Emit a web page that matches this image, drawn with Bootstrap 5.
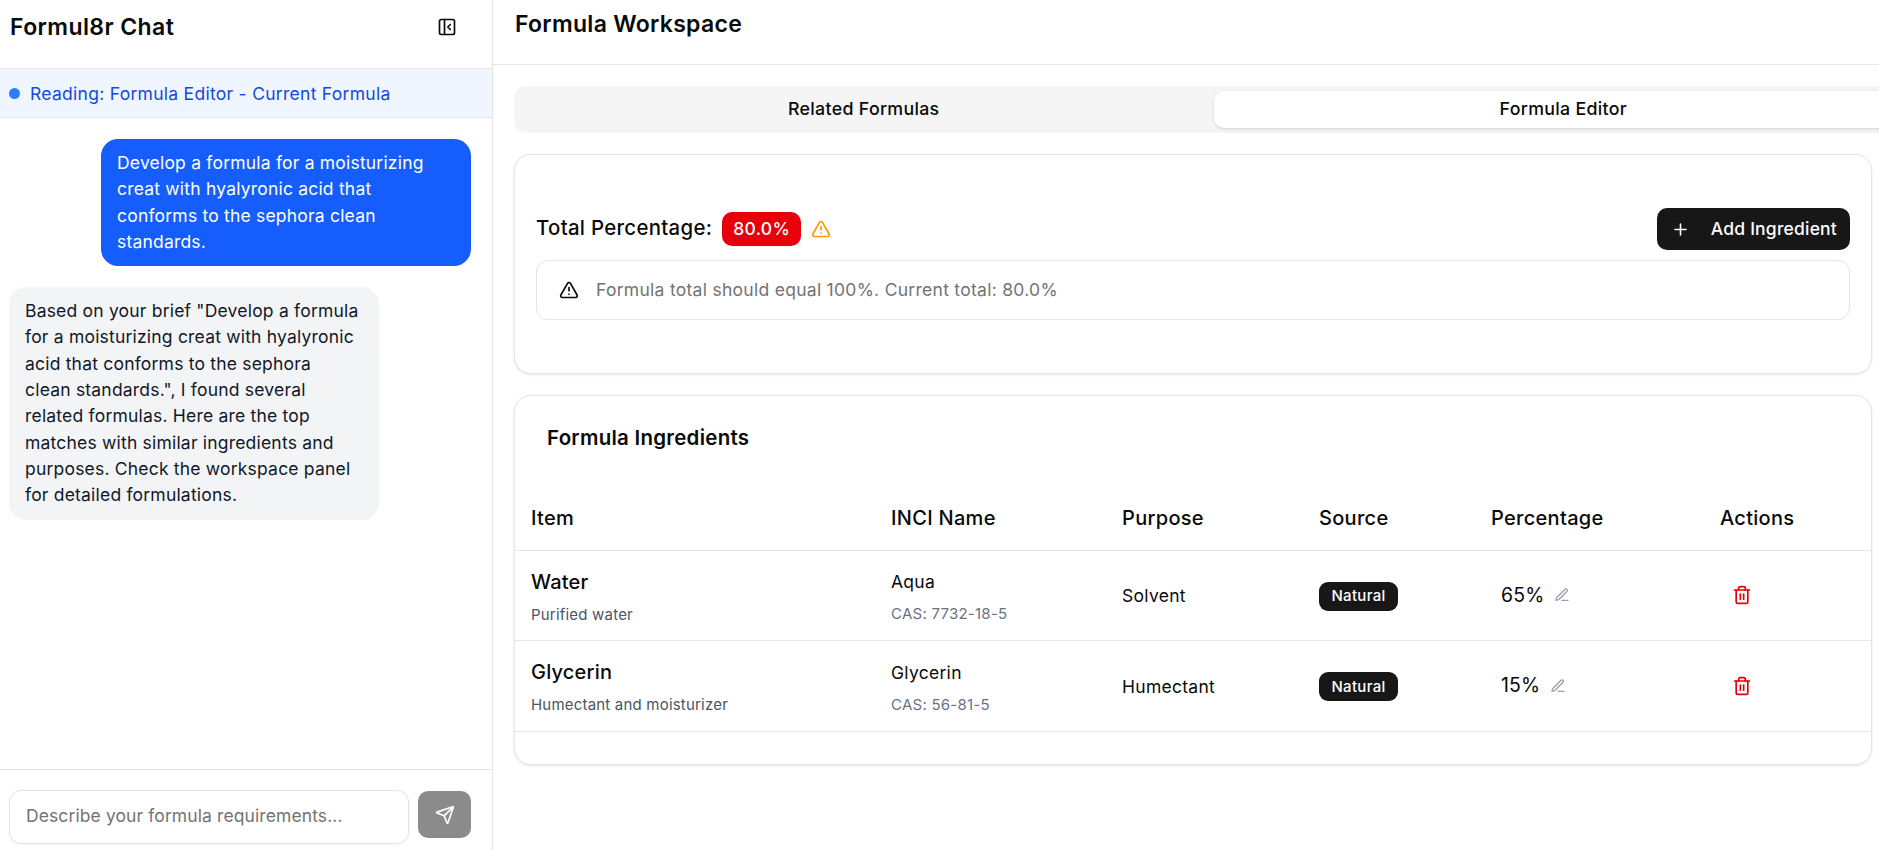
<!DOCTYPE html>
<html lang="en">
<head>
<meta charset="utf-8">
<title>Formul8r</title>
<link href="https://cdn.jsdelivr.net/npm/bootstrap@5.3.0/dist/css/bootstrap.min.css" rel="stylesheet">
<style>
html,body{height:850px;overflow:hidden;}
body{font-family:"Inter","Liberation Sans",sans-serif;color:#0a0a0a;background:#fff;font-size:17.5px;letter-spacing:.28px;}
svg.ic{fill:none;stroke:currentColor;stroke-width:2;stroke-linecap:round;stroke-linejoin:round;display:block;flex:none;}
.shell{height:850px;}
.side{width:493px;border-right:1px solid #e5e5e5;height:850px;}
.side-head{height:69px;padding:13px 35px 0 10px;border-bottom:1px solid #e5e5e5;}
.side-title{font-size:23px;font-weight:600;line-height:28px;margin:0;letter-spacing:.4px;}
.reading{height:49px;background:#eff6ff;border-bottom:1px solid #e5e7eb;padding:3px 0 0 9px;color:#1447e6;gap:10px;}
.dot{width:11px;height:11px;border-radius:50%;background:#2b7fff;flex:none;margin-top:-3px;}
.msgs{padding:21px 21px 0 9px;gap:21px;}
.bub{width:370px;padding:11px 16px 11px 16px;border-radius:17px;line-height:26.3px;letter-spacing:.2px;}
.bub-me{background:#155dfc;color:#fff;align-self:flex-end;}
.bub-bot{background:#f3f4f6;color:#101828;padding-right:19px;}
.composer{border-top:1px solid #e5e5e5;padding:21px 21px 5px 9px;gap:9px;height:81px;}
.inp{width:400px;height:54px;margin-top:-1px;border:1px solid #e5e5e5;border-radius:12px;padding:0 16px 3px;font-size:17.5px;letter-spacing:.1px;box-shadow:0 1px 2px rgba(0,0,0,.05);font-family:inherit;}
.inp::placeholder{color:#737373;opacity:1;}
.send{width:53px;height:47px;background:#8b8b8b;color:#fff;border:0;border-radius:10px;padding:0;}
.work{min-width:0;overflow:hidden;height:850px;}
.work-head{height:65px;border-bottom:1px solid #e5e5e5;padding:9px 0 0 22px;}
.work-title{font-size:23px;font-weight:600;line-height:30px;margin:0;letter-spacing:.28px;}
.work-body{padding:21px 7px 0 21px;}
.tabs-rail{width:1399px;height:47px;background:#f5f5f5;border-radius:12px;padding:5px 0;margin-bottom:21px;}
.tab-a,.tab-b{width:50%;border:0;background:transparent;font-size:17.8px;font-weight:500;color:#0a0a0a;padding:0;letter-spacing:.3px;}
.tab-b{background:#fff;border-radius:10px;box-shadow:0 1px 3px rgba(0,0,0,.15);}
.pane{border:1px solid #e5e5e5;border-radius:17px;box-shadow:0 1px 3px rgba(0,0,0,.1);background:#fff;}
.pane-total{height:220px;padding:53px 21px 0 21px;margin-bottom:21px;}
.total-label{font-size:20.4px;font-weight:500;letter-spacing:.3px;margin-top:-2px;}
.total-badge{background:#e7000b;color:#fff;font-weight:500;border-radius:10px;height:34px;width:79px;margin:0 10px;}
.warn{color:#fe9a00;}
.add-btn{background:#171717;color:#fff;border:0;border-radius:10px;width:193px;height:42px;font-size:17.5px;font-weight:500;padding:0 13px 0 14px;letter-spacing:.2px;}
.notice{margin-top:10px;height:60px;border:1px solid #e5e5e5;border-radius:12px;padding:0 22px;gap:17px;color:#737373;}
.notice svg{color:#0a0a0a;}
.pane-list{height:370px;overflow:hidden;}
.list-title{font-size:20.5px;font-weight:600;margin:0;padding:28px 0 0 32px;height:91px;line-height:28px;letter-spacing:.25px;}
.tbl{table-layout:fixed;width:100%;margin:0;}
.tbl th,.tbl td{padding:0 0 0 16px;border-color:#e5e5e5;vertical-align:middle;color:#0a0a0a;}
.tbl th{font-weight:500;font-size:20px;height:63px;letter-spacing:.3px;}
.tbl td{height:90.5px;}
.tbl td.inci{padding-top:2px;}
.c1{width:360px}.c2{width:231px}.c3{width:197px}.c4{width:172px}.c5{width:229px}
.nm{font-size:20px;font-weight:500;line-height:26px;letter-spacing:.2px;margin-top:3px;}
.sub{font-size:15px;color:#4a5565;line-height:20px;margin-top:10px;letter-spacing:.2px;}
.inci{font-size:17.5px;line-height:26px;letter-spacing:.28px;}
.inci-top{margin-top:3px;}
.subg{font-size:15px;color:#6a7282;line-height:20px;margin-top:9px;letter-spacing:.25px;}
.src{background:#171717;color:#fff;font-size:15px;font-weight:500;border-radius:9px;height:29px;width:79px;letter-spacing:.3px;margin-top:2px;}
.pct{font-size:19.4px;padding-left:10px;gap:10px;letter-spacing:.2px;}
.pen{color:#99a1af;}
.bin{color:#e7000b;margin-left:12px;}
</style>
</head>
<body>
<div class="d-flex shell">
  <aside class="side d-flex flex-column flex-shrink-0">
    <div class="side-head d-flex justify-content-between align-items-start">
      <h1 class="side-title">Formul8r Chat</h1>
      <svg class="ic mt-1" width="20" height="20" viewBox="0 0 24 24"><rect x="3" y="3" width="18" height="18" rx="2"/><path d="M9 3v18"/><path d="m16 15-3-3 3-3"/></svg>
    </div>
    <div class="reading d-flex align-items-center"><span class="dot"></span><span>Reading: Formula Editor - Current Formula</span></div>
    <div class="msgs d-flex flex-column flex-grow-1">
      <div class="bub bub-me">Develop a formula for a moisturizing creat with hyalyronic acid that conforms to the sephora clean standards.</div>
      <div class="bub bub-bot">Based on your brief "Develop a formula for a moisturizing creat with hyalyronic acid that conforms to the sephora clean standards.", I found several related formulas. Here are the top matches with similar ingredients and purposes. Check the workspace panel for detailed formulations.</div>
    </div>
    <div class="composer d-flex align-items-start">
      <input class="inp" placeholder="Describe your formula requirements...">
      <button class="send d-flex align-items-center justify-content-center" aria-label="Send">
        <svg class="ic" width="20" height="20" viewBox="0 0 24 24"><path d="M14.536 21.686a.5.5 0 0 0 .937-.024l6.5-19a.496.496 0 0 0-.635-.635l-19 6.5a.5.5 0 0 0-.024.937l7.93 3.18a2 2 0 0 1 1.112 1.11z"/><path d="m21.854 2.147-10.94 10.939"/></svg>
      </button>
    </div>
  </aside>
  <main class="work flex-grow-1">
    <div class="work-head"><h2 class="work-title">Formula Workspace</h2></div>
    <div class="work-body">
      <div class="tabs-rail d-flex">
        <button class="tab-a">Related Formulas</button>
        <button class="tab-b">Formula Editor</button>
      </div>
      <section class="pane pane-total">
        <div class="d-flex justify-content-between align-items-center">
          <div class="d-flex align-items-center">
            <span class="total-label">Total Percentage:</span>
            <span class="total-badge d-flex align-items-center justify-content-center">80.0%</span>
            <svg class="ic warn" width="20" height="20" viewBox="0 0 24 24"><path d="m21.73 18-8-14a2 2 0 0 0-3.48 0l-8 14A2 2 0 0 0 4 21h16a2 2 0 0 0 1.73-3"/><path d="M12 9v4"/><path d="M12 17h.01"/></svg>
          </div>
          <button class="add-btn d-flex align-items-center justify-content-between">
            <svg class="ic" width="19" height="19" viewBox="0 0 24 24"><path d="M5 12h14"/><path d="M12 5v14"/></svg>
            <span>Add Ingredient</span>
          </button>
        </div>
        <div class="notice d-flex align-items-center">
          <svg class="ic" width="20" height="20" viewBox="0 0 24 24"><path d="m21.73 18-8-14a2 2 0 0 0-3.48 0l-8 14A2 2 0 0 0 4 21h16a2 2 0 0 0 1.73-3"/><path d="M12 9v4"/><path d="M12 17h.01"/></svg>
          <span>Formula total should equal 100%. Current total: 80.0%</span>
        </div>
      </section>
      <section class="pane pane-list">
        <h3 class="list-title">Formula Ingredients</h3>
        <table class="table tbl">
          <colgroup><col class="c1"><col class="c2"><col class="c3"><col class="c4"><col class="c5"><col></colgroup>
          <thead><tr><th>Item</th><th>INCI Name</th><th>Purpose</th><th>Source</th><th>Percentage</th><th>Actions</th></tr></thead>
          <tbody>
            <tr>
              <td><div class="nm">Water</div><div class="sub">Purified water</div></td>
              <td><div class="inci inci-top">Aqua</div><div class="subg">CAS: 7732-18-5</div></td>
              <td class="inci">Solvent</td>
              <td><span class="src d-flex align-items-center justify-content-center">Natural</span></td>
              <td><div class="pct d-flex align-items-center"><span>65%</span><svg class="ic pen" width="16" height="16" viewBox="0 0 24 24"><path d="M12 20h9"/><path d="M16.5 3.5a2.12 2.12 0 0 1 3 3L7 19l-4 1 1-4Z"/></svg></div></td>
              <td><svg class="ic bin" width="20" height="20" viewBox="0 0 24 24"><path d="M3 6h18"/><path d="M19 6v14c0 1-1 2-2 2H7c-1 0-2-1-2-2V6"/><path d="M8 6V4c0-1 1-2 2-2h4c1 0 2 1 2 2v2"/><path d="M10 11v6"/><path d="M14 11v6"/></svg></td>
            </tr>
            <tr>
              <td><div class="nm">Glycerin</div><div class="sub">Humectant and moisturizer</div></td>
              <td><div class="inci inci-top">Glycerin</div><div class="subg">CAS: 56-81-5</div></td>
              <td class="inci">Humectant</td>
              <td><span class="src d-flex align-items-center justify-content-center">Natural</span></td>
              <td><div class="pct d-flex align-items-center"><span>15%</span><svg class="ic pen" width="16" height="16" viewBox="0 0 24 24"><path d="M12 20h9"/><path d="M16.5 3.5a2.12 2.12 0 0 1 3 3L7 19l-4 1 1-4Z"/></svg></div></td>
              <td><svg class="ic bin" width="20" height="20" viewBox="0 0 24 24"><path d="M3 6h18"/><path d="M19 6v14c0 1-1 2-2 2H7c-1 0-2-1-2-2V6"/><path d="M8 6V4c0-1 1-2 2-2h4c1 0 2 1 2 2v2"/><path d="M10 11v6"/><path d="M14 11v6"/></svg></td>
            </tr>
          </tbody>
        </table>
      </section>
    </div>
  </main>
</div>
<script src="https://cdn.jsdelivr.net/npm/bootstrap@5.3.0/dist/js/bootstrap.bundle.min.js"></script>
</body>
</html>
